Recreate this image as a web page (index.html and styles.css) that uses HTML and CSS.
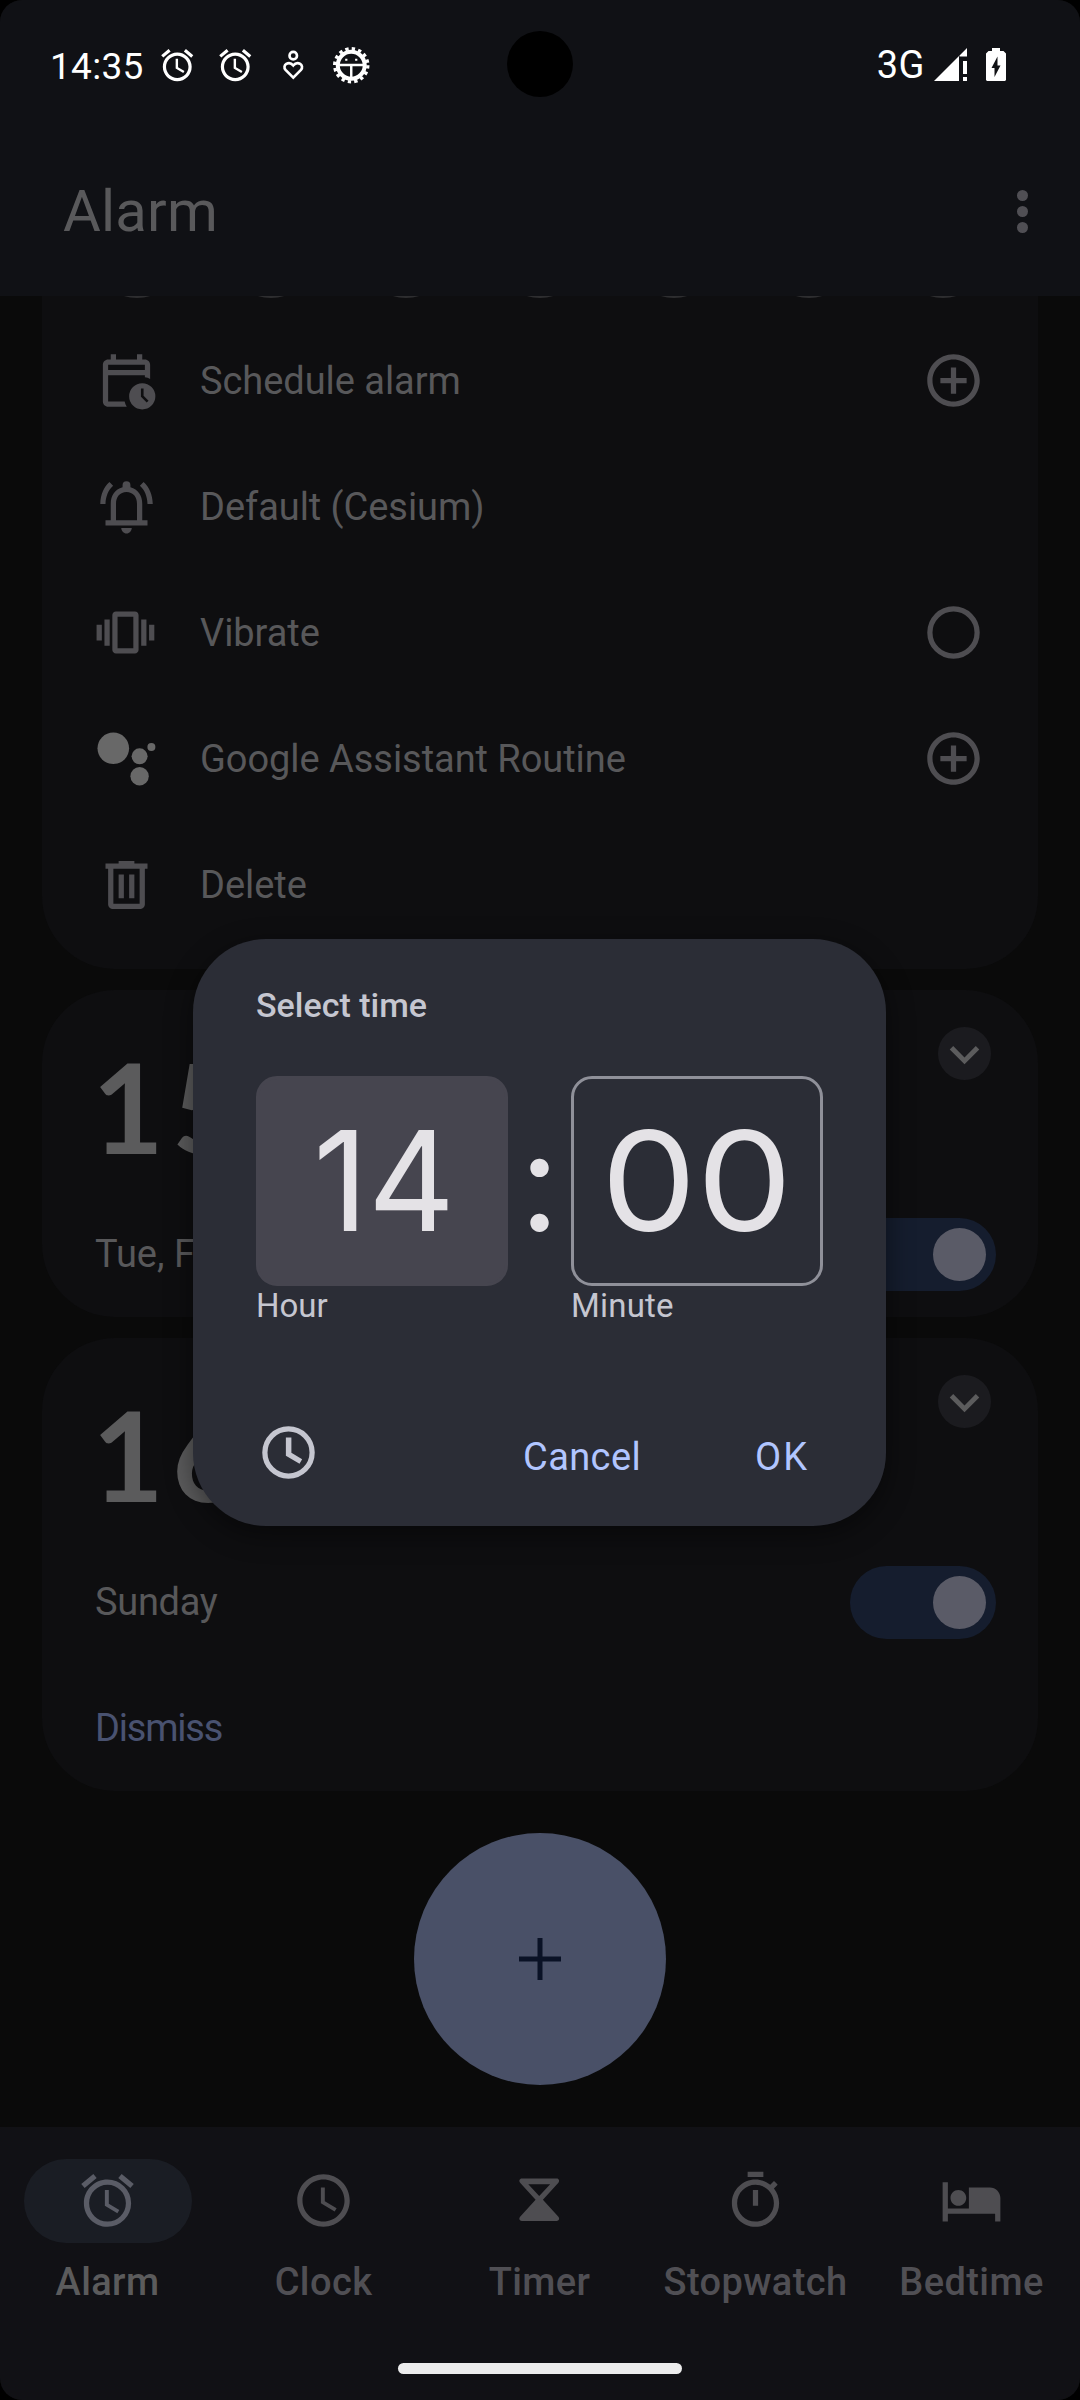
FILE: index.html
```html
<!DOCTYPE html>
<html lang="en">
<head>
<meta charset="utf-8">
<title>Alarm</title>
<link rel="stylesheet" href="styles.css">
</head>
<body>
<svg class="defs" aria-hidden="true">
  <symbol id="i-alarm" viewBox="0 0 24 24"><path d="M22 5.72l-4.6-3.86-1.29 1.53 4.6 3.86L22 5.72zM7.88 3.39L6.6 1.86 2 5.71l1.29 1.53 4.59-3.85zM12.5 8H11v6l4.75 2.85.75-1.23-4-2.37V8zM12 4c-4.97 0-9 4.03-9 9s4.02 9 9 9a9 9 0 0 0 0-18zm0 16c-3.87 0-7-3.13-7-7s3.13-7 7-7 7 3.13 7 7-3.13 7-7 7z"/></symbol>
  <symbol id="i-clock" viewBox="0 0 24 24"><path d="M11.99 2C6.47 2 2 6.48 2 12s4.47 10 9.99 10C17.52 22 22 17.52 22 12S17.52 2 11.99 2zM12 20c-4.42 0-8-3.58-8-8s3.58-8 8-8 8 3.58 8 8-3.58 8-8 8zm.5-13H11v6l5.25 3.15.75-1.23-4.5-2.67z"/></symbol>
  <symbol id="i-plus-circle" viewBox="0 0 24 24"><path d="M13 7h-2v4H7v2h4v4h2v-4h4v-2h-4V7zm-1-5C6.48 2 2 6.48 2 12s4.48 10 10 10 10-4.48 10-10S17.52 2 12 2zm0 18c-4.41 0-8-3.59-8-8s3.59-8 8-8 8 3.59 8 8-3.59 8-8 8z"/></symbol>
  <symbol id="i-expand" viewBox="0 0 24 24"><path d="M7.41 8.59L12 13.17l4.59-4.58L18 10l-6 6-6-6z"/></symbol>
</svg>

<div class="screen">
  <div class="status">
    <span class="status-time">14:35</span>
    <div class="status-icons">
      <svg class="s-icon"><use href="#i-alarm"/></svg>
      <svg class="s-icon"><use href="#i-alarm"/></svg>
      <svg class="s-icon" viewBox="0 0 38 38" fill="none" stroke="#fff" stroke-width="2.6">
        <circle cx="19" cy="9.5" r="3.7"/>
        <path d="M19 31.2l-7.6-7.6c-3.8-4.6 3.2-9.6 7.6-4.4 4.4-5.2 11.4-.2 7.6 4.4z"/>
      </svg>
      <svg class="s-icon" viewBox="0 0 38 38" fill="none" stroke="#fff">
        <circle cx="19" cy="19" r="13.3" stroke-width="4"/>
        <circle cx="19" cy="19" r="16.4" stroke-width="3.2" stroke-dasharray="3.3 3.14"/>
        <path d="M7 18.8h24M19 19v13" stroke-width="2.4"/>
        <path d="M13 13.5h2.2M22.8 13.5H25" stroke-width="2"/>
      </svg>
    </div>
    <span class="status-net">3G</span>
    <svg class="signal" viewBox="0 0 33 33"><path fill="#fff" d="M0 33L25 8v25zM25.5 7.5L33 0v8.500h-7.500zM29 13h4v13h-4zM29 29h4v4h-4z"/></svg>
    <svg class="battery" viewBox="0 0 20 33"><path fill="#fff" fill-rule="evenodd" d="M6 0h8v3h3.500L20 5.500V32l-1 1H1l-1-1V5.500L2.500 3H6zM11.500 8.500L5.500 20h3v9l6-11.500h-3z"/></svg>
  </div>
  <div class="camera"></div>

  <header class="appbar">
    <h1>Alarm</h1>
    <div class="dots"><i></i><i></i><i></i></div>
  </header>

  <main class="list">
    <section class="card card-open">
      <div class="days"><i></i><i></i><i></i><i></i><i></i><i></i><i></i></div>
      <div class="option">
        <svg class="icon" viewBox="0 0 24 24"><path fill-rule="evenodd" d="M6 2h2v2h8V2h2v2h1c1.100 0 2 .9 2 2v5.400c-.6-.3-1.300-.5-2-.6V10H5v10h6.300c.15.7.4 1.400.8 2H5c-1.100 0-2-.9-2-2V6c0-1.100.9-2 2-2h1zM5 6v2h14V6zM18 13a5 5 0 1 0 0 10 5 5 0 0 0 0-10zm-.5 2h1v2.800l1.900 1.900-.7.7-2.200-2.200z"/></svg>
        <span class="label">Schedule alarm</span>
        <svg class="icon"><use href="#i-plus-circle"/></svg>
      </div>
      <div class="option">
        <svg class="icon" viewBox="0 0 24 24"><path d="M10 20.200h4c0 1.100-.9 2.100-2 2.100s-2-1-2-2.100z"/><path fill-rule="evenodd" d="M18 17.200V11c0-3.100-1.600-5.600-4.500-6.300V3.900a1.500 1.500 0 0 0-3 0v.8C7.600 5.400 6 7.900 6 11v6.200H4v2h16v-2zm-2 0H8V11c0-2.600 1.500-4.500 4-4.500s4 1.900 4 4.500z"/><path d="M6.900 4.100L5.500 2.700C3.300 4.700 2.100 7.500 2 11h2c.1-2.900 1.100-5.300 2.900-6.900zM17.100 4.100l1.400-1.400c2.200 2 3.400 4.800 3.500 8.300h-2c-.1-2.900-1.100-5.300-2.900-6.900z"/></svg>
        <span class="label">Default (Cesium)</span>
      </div>
      <div class="option">
        <svg class="icon" viewBox="0 0 24 24"><path fill-rule="evenodd" d="M.6 9h2v6h-2zM3.600 7h2v10h-2zM17.600 7h2v10h-2zM20.600 9h2v6h-2zM8 4h7.200c.8 0 1.400.6 1.400 1.400v13.200c0 .8-.6 1.400-1.400 1.400H8c-.8 0-1.400-.6-1.400-1.400V5.400C6.600 4.600 7.200 4 8 4zm.6 2v12h6V6z"/></svg>
        <span class="label">Vibrate</span>
        <svg class="icon" viewBox="0 0 24 24"><circle cx="12" cy="12" r="9" fill="none" stroke="#4e4d51" stroke-width="2"/></svg>
      </div>
      <div class="option">
        <svg class="icon icon-assistant" viewBox="0 0 63 63"><circle cx="18.300" cy="21.300" r="15.800"/><circle cx="44.600" cy="29.300" r="8"/><circle cx="56.400" cy="20" r="4"/><circle cx="44.600" cy="49.200" r="9.200"/></svg>
        <span class="label">Google Assistant Routine</span>
        <svg class="icon"><use href="#i-plus-circle"/></svg>
      </div>
      <div class="option">
        <svg class="icon" viewBox="0 0 24 24"><path fill-rule="evenodd" d="M9 3h6v1h5v2h-1v13.500c0 1-.8 1.800-1.800 1.800H6.800c-1 0-1.800-.8-1.800-1.800V6H4V4h5zM7 6v13.300h10V6zM9 8.200h2v9H9zM13 8.200h2v9h-2z"/></svg>
        <span class="label">Delete</span>
      </div>
    </section>

    <section class="card">
      <div class="card-top">
        <span class="time">15</span>
        <div class="chevron"><svg><use href="#i-expand"/></svg></div>
      </div>
      <div class="card-row">
        <span class="label">Tue, F</span>
        <div class="toggle"><i></i></div>
      </div>
    </section>

    <section class="card">
      <div class="card-top">
        <span class="time">16</span>
        <div class="chevron"><svg><use href="#i-expand"/></svg></div>
      </div>
      <div class="card-row">
        <span class="label sunday">Sunday</span>
        <div class="toggle"><i></i></div>
      </div>
      <div class="card-row"><span class="label dismiss">Dismiss</span></div>
    </section>

    <div class="fab"><svg viewBox="0 0 42 42"><path d="M18.500 0h5v18.500H42v5H23.500V42h-5V23.500H0v-5h18.500z"/></svg></div>
  </main>

  <nav class="tabs">
    <div class="tab active"><div class="pill"><svg class="icon"><use href="#i-alarm"/></svg></div><span>Alarm</span></div>
    <div class="tab"><div class="pill"><svg class="icon"><use href="#i-clock"/></svg></div><span>Clock</span></div>
    <div class="tab"><div class="pill"><svg class="icon" viewBox="0 0 63 63"><path fill-rule="evenodd" d="M13.800 9.500h34.900c2.300 0 3.200 2.500 1.700 4.200L34.900 30.700l15.500 17.100c1.500 1.700.6 4.200-1.700 4.200H13.800c-2.300 0-3.200-2.500-1.700-4.200l15.500-17.100L12.100 13.700c-1.500-1.700-.6-4.200 1.700-4.200zM20.300 15.300L31.200 27l11-11.700z"/></svg></div><span>Timer</span></div>
    <div class="tab"><div class="pill"><svg class="icon" viewBox="0 0 24 24"><path d="M15 1H9v2h6V1zm-4 13h2V8h-2v6zm8.030-6.610l1.420-1.420c-.43-.51-.9-.99-1.410-1.410l-1.420 1.420C16.070 4.740 14.120 4 12 4c-4.970 0-9 4.030-9 9s4.020 9 9 9 9-4.030 9-9c0-2.120-.74-4.070-1.970-5.610zM12 20c-3.870 0-7-3.130-7-7s3.130-7 7-7 7 3.130 7 7-3.130 7-7 7z"/></svg></div><span>Stopwatch</span></div>
    <div class="tab"><div class="pill"><svg class="icon" viewBox="0 0 24 24"><path d="M7 14c1.660 0 3-1.340 3-3S8.660 8 7 8s-3 1.340-3 3 1.340 3 3 3zM19 7h-8v8H3V5H1v15h2v-3h18v3h2v-9c0-2.210-1.790-4-4-4z"/></svg></div><span>Bedtime</span></div>
  </nav>
  <div class="home"></div>

  <div class="dialog" role="dialog">
    <h2>Select time</h2>
    <div class="fields">
      <div class="field">
        <div class="box selected"><span class="narrow">14</span></div>
        <span class="caption">Hour</span>
      </div>
      <span class="colon">:</span>
      <div class="field">
        <div class="box"><span class="wide">00</span></div>
        <span class="caption minute">Minute</span>
      </div>
    </div>
    <div class="actions">
      <svg class="icon" viewBox="0 0 24 24"><circle cx="12" cy="12" r="9" fill="none" stroke="#c5c6d0" stroke-width="2"/><path d="M11 6.300h2.100v5.800l4.100 2.500-1 1.700-5.200-3.100z"/></svg>
      <span class="cancel">Cancel</span>
      <span class="ok">OK</span>
    </div>
  </div>
</div>
</body>
</html>
```

FILE: styles.css
```css
* { box-sizing: border-box; }

body {
  margin: 0;
  background: #000;
  font-family: Roboto, "Liberation Sans", sans-serif;
}

h1, h2 { margin: 0; font-weight: 400; }

svg { display: block; flex: none; }

.defs { position: absolute; width: 0; height: 0; }

.screen {
  position: relative;
  display: flex;
  flex-direction: column;
  width: 1080px;
  height: 2400px;
  overflow: hidden;
  border-radius: 22px;
  background: #0a0a0a;
}

/* Status bar */
.status {
  display: flex;
  align-items: center;
  height: 128px;
  padding: 0 74px 0 50px;
  background: #101115;
  color: #fff;
  font-size: 37px;
}
.status-time { width: 108px; padding-top: 4px; letter-spacing: .3px; }
.status-icons { display: flex; gap: 19.5px; padding-top: 2px; margin-right: auto; }
.s-icon { width: 38.5px; height: 38.5px; fill: #fff; }
.s-icon[fill="none"] { fill: none; }
.status-net { margin-right: 9px; padding-top: 1px; font-size: 38px; letter-spacing: .5px; }
.signal { width: 33px; height: 33px; margin-right: 19px; }
.battery { width: 20px; height: 33px; }
.camera {
  position: absolute;
  left: 507px;
  top: 31px;
  width: 66px;
  height: 66px;
  border-radius: 50%;
  background: #000;
}

/* App bar */
.appbar {
  display: flex;
  align-items: center;
  justify-content: space-between;
  height: 168px;
  padding: 0 52px 2px 63px;
  background: #101115;
}
.appbar h1 { color: #59595b; font-size: 58px; letter-spacing: .2px; line-height: 70px; }
.dots { display: flex; flex-direction: column; gap: 5px; }
.dots i { width: 11px; height: 11px; border-radius: 50%; background: #504f54; }

/* Alarm list */
.list {
  display: flex;
  flex-direction: column;
  gap: 21px;
  height: 1831px;
  padding: 0 42px;
}
.card { border-radius: 73px; background: #0e0e10; }
.card-open { height: 673px; border-radius: 0 0 73px 73px; }
.days {
  display: flex;
  justify-content: space-between;
  height: 21px;
  padding: 0 53px;
  overflow: hidden;
}
.days i {
  width: 84px;
  height: 84px;
  margin-top: -82.5px;
  border: 3px solid #2e2e30;
  border-radius: 50%;
}
.option {
  display: flex;
  align-items: center;
  height: 126px;
  padding: 0 53px;
}
.icon { width: 63px; height: 63px; fill: #4e4d51; }
.icon-assistant { fill: #686868; }
.label { color: #58585a; font-size: 38px; line-height: 44px; }
.option .label { flex: 1; margin-left: 42px; padding-top: 1px; letter-spacing: -.05px; }

.card-top {
  display: flex;
  justify-content: space-between;
  height: 201px;
  padding: 0 47px 0 50px;
}
.time {
  margin-top: 54px;
  color: #5b5b5c;
  font: 700 124px/124px Lato, sans-serif;
  letter-spacing: 8px;
}
.chevron {
  display: flex;
  align-items: center;
  justify-content: center;
  width: 53px;
  height: 53px;
  margin-top: 37px;
  border-radius: 50%;
  background: #1b1b1f;
}
.chevron svg { width: 59px; height: 59px; margin-top: 2px; fill: #5c5c5d; }
.card-row {
  display: flex;
  align-items: center;
  justify-content: space-between;
  height: 126px;
  padding: 0 42px 1px 53px;
}
.toggle {
  display: flex;
  justify-content: flex-end;
  width: 146px;
  height: 73px;
  margin-top: 2px;
  padding: 10px;
  border-radius: 37px;
  background: #151d2e;
}
.toggle i { width: 53px; height: 53px; border-radius: 50%; background: #5a5b67; }
.sunday { letter-spacing: -.3px; }
.dismiss { color: #495270; letter-spacing: -1.2px; }

.fab {
  display: flex;
  align-items: center;
  justify-content: center;
  align-self: center;
  width: 252px;
  height: 252px;
  margin-top: 21px;
  border-radius: 50%;
  background: #495067;
}
.fab svg { width: 42px; height: 42px; margin: 0 1px 1px 0; fill: #0a1226; }

/* Bottom navigation */
.tabs {
  display: flex;
  height: 236px;
  padding-top: 32px;
  background: #111115;
}
.tab {
  display: flex;
  flex-direction: column;
  align-items: center;
  gap: 17px;
  width: 216px;
  padding-right: 1px;
  color: #504f54;
  font-size: 38px;
  font-weight: 500;
  line-height: 44px;
  letter-spacing: .4px;
}
.pill {
  display: flex;
  align-items: center;
  justify-content: center;
  width: 168px;
  height: 84px;
  padding-bottom: 1px;
  border-radius: 42px;
}
.tab.active { color: #5b5b5c; }
.active .pill { background: #1a1d24; }
.active .icon { fill: #5a5c66; }
.home {
  height: 37px;
  padding: 0 398px;
  background: #111115;
}
.home::before {
  content: "";
  display: block;
  height: 11px;
  border-radius: 6px;
  background: #ececec;
}

/* Time picker dialog */
.dialog {
  position: absolute;
  left: 193px;
  top: 939px;
  width: 693px;
  height: 587px;
  padding: 46px 63px 0;
  border-radius: 73px;
  background: #2b2d36;
  box-shadow: 0 8px 28px rgba(0, 0, 0, .45);
}
.dialog h2 { color: #c5c6d0; font-size: 34px; font-weight: 500; line-height: 40px; }
.fields { display: flex; margin-top: 51px; }
.field { width: 252px; }
.box {
  display: flex;
  align-items: center;
  justify-content: center;
  height: 210px;
  border: 3px solid #8f9099;
  border-radius: 21px;
  color: #e4e2e6;
}
.box.selected { border-color: #46454f; background: #46454f; }
.box, .colon { font-family: Inter, sans-serif; font-size: 139px; line-height: 210px; }
.wide { display: inline-block; transform: scaleX(1.09); }
.narrow { display: inline-block; transform: translateX(2px) scaleX(.97); }
.colon {
  display: flex;
  justify-content: center;
  width: 63px;
  height: 210px;
  color: #e4e2e6;
}
.caption {
  display: block;
  color: #c5c6d0;
  font-size: 33px;
  line-height: 40px;
}
.minute { letter-spacing: .2px; }
.actions {
  display: flex;
  align-items: center;
  margin-top: 95px;
  color: #b1c5ff;
  font-size: 38px;
  letter-spacing: .4px;
}
.actions .icon { margin-left: 1px; fill: #c5c6d0; }
.cancel { margin: 9px 0 0 203px; width: 232px; }
.ok { margin-top: 9px; letter-spacing: 2px; }
```
